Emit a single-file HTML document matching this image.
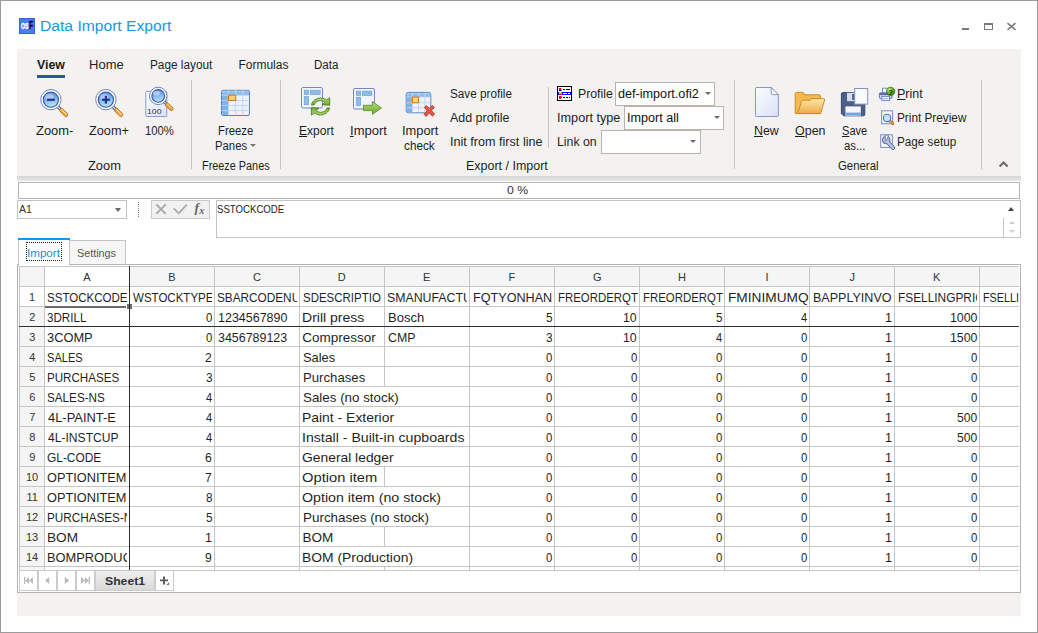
<!DOCTYPE html>
<html lang="en">
<head>
<meta charset="utf-8">
<title>Data Import Export</title>
<style>
html,body{margin:0;padding:0}
body{width:1038px;height:633px;position:relative;overflow:hidden;background:#fff;font-family:"Liberation Sans",sans-serif;font-size:12px;color:#1e1e1e}
div,span,svg{position:absolute;box-sizing:border-box}
.t{white-space:pre;transform-origin:0 0;display:block}
.t u{text-decoration:underline;text-underline-offset:1px}
.c{overflow:hidden}
#win{left:0;top:0;width:1038px;height:633px;border:1px solid #9b9b9b}
#ribbon{left:17px;top:49px;width:1004px;height:127px;background:#f3f2f1}
#shadow{left:17px;top:176px;width:1004px;height:5px;background:linear-gradient(#d6d5d4,#e9e8e7)}
.sep{width:1px;background:#c8c6c4;top:80px;height:89px}
.combo{background:#fff;border:1px solid #b9b5ae;height:24px;width:100px}
.arr{width:0;height:0;border-left:3px solid transparent;border-right:3px solid transparent;border-top:3px solid #6a6a6a}
#prog{left:18px;top:182px;width:1002px;height:17px;border:1px solid #b4b4b4;background:#fff}
#namebox{left:17px;top:200px;width:110px;height:19px;border:1px solid #c3c3c3;background:#fff}
#fbtn{left:151px;top:200px;width:59px;height:19px;border:1px solid #c9c9c9;background:#f1f1f1}
#finput{left:216px;top:200px;width:805px;height:38px;border:1px solid #c3c3c3;background:#fff}
#panel{left:17px;top:264px;width:1004px;height:329px;border:1px solid #b4b4b4;background:#fff}
#tab1{left:18px;top:240px;width:51px;height:26px;background:#fff;border-left:1px solid #c4c4c4}
#tab2{left:69px;top:240px;width:57px;height:24px;background:#f6f6f6;border:1px solid #c4c4c4;border-bottom:none}
#focus{left:26px;top:242px;width:36px;height:19px;border:1px dotted #222}
#grid{left:19px;top:266px;width:1000px;height:304px;overflow:hidden;background:#fff}
.hl{left:0;width:1000px;height:1px;background:#c5c5c5;margin-top:-266px}
.vl{width:1px;background:#c5c5c5;margin-left:-19px;margin-top:-266px}
.hc{top:1px;height:19px;background:#f5f5f5;border-left:0;margin-left:-19px}
.rh{left:1px;width:24px;background:#f5f5f5;margin-top:-266px}
#botstrip{left:17px;top:593px;width:1004px;height:23px;background:#f3f2f1}
.nb{top:570px;width:19px;height:21px;border:1px solid #cbcbcb;background:#fff}
</style>
</head>
<body>
<div id="win"></div>

<!-- title bar -->
<div id="appicon" style="left:19px;top:18px;width:16px;height:16px;background:#4b7bed;border:1px solid #3464dc">
  <span class="t" style="left:0.9px;top:2px;font-size:9px;line-height:10px;font-weight:700;color:#fff;-webkit-text-stroke:.5px #fff;transform:scaleX(.56)">OS</span>
  <span class="t" style="left:9.3px;top:0px;font-size:11px;line-height:12px;font-weight:700;color:#0e0638;-webkit-text-stroke:.4px #0e0638;transform:scaleX(.62)">F</span>
</div>
<div style="left:962px;top:28px;width:7px;height:2px;background:#7a7a7a"></div>
<div style="left:984px;top:23px;width:9px;height:7px;border:1px solid #7a7a7a;border-top-width:2px"></div>
<svg style="left:1006px;top:22px" width="11" height="9" viewBox="0 0 11 9"><path d="M1.5 1.2 L9.5 7.8 M9.5 1.2 L1.5 7.8" stroke="#7a7a7a" stroke-width="1.5" fill="none"/></svg>

<!-- ribbon -->
<div id="ribbon"></div>
<div id="shadow"></div>
<div style="left:37px;top:75px;width:28px;height:3px;background:#2b579a"></div>
<div class="sep" style="left:191px"></div>
<div class="sep" style="left:280px"></div>
<div class="sep" style="left:734px"></div>
<div class="sep" style="left:981px"></div>
<div class="sep" style="left:548px;top:87px;height:61px"></div>

<svg width="0" height="0" style="left:0;top:0">
  <defs>
    <linearGradient id="lens" x1="0" y1="0" x2="0.2" y2="1"><stop offset="0" stop-color="#4f86dc"/><stop offset=".5" stop-color="#7fb0ea"/><stop offset="1" stop-color="#b4e4f4"/></linearGradient>
    <linearGradient id="pg" x1="0" y1="0" x2="1" y2="1"><stop offset="0" stop-color="#fbfcff"/><stop offset="1" stop-color="#d9e2f5"/></linearGradient>
    <linearGradient id="hdr" x1="0" y1="0" x2="0" y2="1"><stop offset="0" stop-color="#a4cef2"/><stop offset="1" stop-color="#78b0e4"/></linearGradient>
    <linearGradient id="grn" x1="0" y1="0" x2="0" y2="1"><stop offset="0" stop-color="#b4dc78"/><stop offset="1" stop-color="#6ea832"/></linearGradient>
    <linearGradient id="fold" x1="0" y1="0" x2="0" y2="1"><stop offset="0" stop-color="#fde6ae"/><stop offset="1" stop-color="#efab45"/></linearGradient>
    <linearGradient id="org" x1="0" y1="0" x2="1" y2="1"><stop offset="0" stop-color="#f9c86a"/><stop offset="1" stop-color="#d8851e"/></linearGradient>
  </defs>
</svg>

<!-- Zoom- -->
<svg style="left:38px;top:87px" width="34" height="32" viewBox="0 0 34 32">
  <path d="M19.7 19.5 L22.9 22.7" stroke="#3d5296" stroke-width="3.2"/>
  <path d="M19.7 19.5 L22.9 22.7" stroke="#e4e9f6" stroke-width="1.3"/>
  <path d="M23.4 23.2 L28.0 27.8" stroke="#b56a1a" stroke-width="4.4" stroke-linecap="round"/>
  <path d="M23.4 23.2 L28.0 27.8" stroke="#f0a23a" stroke-width="3.1" stroke-linecap="round"/>
  <path d="M23.799999999999997 22.8 L28.3 27.3" stroke="#fde2b4" stroke-width="1.1" stroke-linecap="round"/>
  <circle cx="12.9" cy="12.65" r="10.2" fill="#fdfdff" stroke="#7583b6" stroke-width="1"/>
  <circle cx="12.9" cy="12.65" r="7.6" fill="url(#lens)" stroke="#3659a9" stroke-width="1.1"/>
  <ellipse cx="11.3" cy="9.850000000000001" rx="4.2" ry="2.9" fill="#fff" opacity=".42"/>
  <rect x="9" y="11.7" width="7.8" height="2.1" fill="#1d2f8a"/>
</svg>
<!-- Zoom+ -->
<svg style="left:93.3px;top:87px" width="34" height="32" viewBox="0 0 34 32">
  <path d="M19.7 19.5 L22.9 22.7" stroke="#3d5296" stroke-width="3.2"/>
  <path d="M19.7 19.5 L22.9 22.7" stroke="#e4e9f6" stroke-width="1.3"/>
  <path d="M23.4 23.2 L28.0 27.8" stroke="#b56a1a" stroke-width="4.4" stroke-linecap="round"/>
  <path d="M23.4 23.2 L28.0 27.8" stroke="#f0a23a" stroke-width="3.1" stroke-linecap="round"/>
  <path d="M23.799999999999997 22.8 L28.3 27.3" stroke="#fde2b4" stroke-width="1.1" stroke-linecap="round"/>
  <circle cx="12.9" cy="12.65" r="10.2" fill="#fdfdff" stroke="#7583b6" stroke-width="1"/>
  <circle cx="12.9" cy="12.65" r="7.6" fill="url(#lens)" stroke="#3659a9" stroke-width="1.1"/>
  <ellipse cx="11.3" cy="9.850000000000001" rx="4.2" ry="2.9" fill="#fff" opacity=".42"/>
  <rect x="9" y="11.7" width="7.8" height="2.1" fill="#1d2f8a"/><rect x="11.85" y="8.8" width="2.1" height="7.8" fill="#1d2f8a"/>
</svg>
<!-- 100% -->
<svg style="left:144px;top:85px" width="34" height="34" viewBox="0 0 34 34">
  <rect x="1.8" y="6.3" width="21" height="25.2" rx="1" fill="url(#pg)" stroke="#8a9bcd" stroke-width="1"/>
  <path d="M20 16.6 L22.6 19.2" stroke="#3d5296" stroke-width="2.9"/>
  <path d="M20 16.6 L22.6 19.2" stroke="#e4e9f6" stroke-width="1.2"/>
  <path d="M23.1 19.7 L27.4 23.8" stroke="#b56a1a" stroke-width="4.0" stroke-linecap="round"/>
  <path d="M23.1 19.7 L27.4 23.8" stroke="#f0a23a" stroke-width="2.7" stroke-linecap="round"/>
  <path d="M23.5 19.3 L27.7 23.3" stroke="#fde2b4" stroke-width="1.0" stroke-linecap="round"/>
  <circle cx="14.2" cy="10.9" r="8.7" fill="#fdfdff" stroke="#7583b6" stroke-width="1"/>
  <circle cx="14.2" cy="10.9" r="6.3" fill="url(#lens)" stroke="#3659a9" stroke-width="1.1"/>
  <ellipse cx="12.6" cy="8.100000000000001" rx="3.5" ry="2.4" fill="#fff" opacity=".42"/>
  
</svg>
<!-- Freeze panes -->
<svg style="left:220px;top:89px" width="32" height="28" viewBox="0 0 32 28">
  <rect x="1.5" y="1.3" width="28" height="25.2" rx="1.6" fill="#eef3fb" stroke="#4f7cc2" stroke-width="1"/>
  <path d="M2 3.3 Q2 1.8 3.5 1.8 H27.5 Q29 1.8 29 3.3 V6.3 H2Z" fill="url(#hdr)"/>
  <rect x="2" y="6" width="6.5" height="20" fill="#7db3e6"/>
  <path d="M8.5 1.5 V26.5 M15.7 1.5 V26.5 M22.8 1.5 V26.5 M1.5 6.2 H29.5 M1.5 11.5 H29.5 M1.5 16.5 H29.5 M1.5 21.6 H29.5" stroke="#c3d3ee" stroke-width="1" fill="none"/>
  <path d="M8.5 1.5 V6.2 M15.7 1.5 V6.2 M22.8 1.5 V6.2 M1.5 11.5 H8.5 M1.5 16.5 H8.5 M1.5 21.6 H8.5" stroke="#a9d0f2" stroke-width="1" fill="none"/>
  <rect x="8.5" y="6.2" width="7.2" height="5.3" fill="#f8cf72" stroke="#cf7a1c" stroke-width="1"/>
</svg>
<!-- Export -->
<svg style="left:300px;top:86px" width="32" height="30" viewBox="0 0 32 30">
  <rect x="1.5" y="1.5" width="21" height="20.5" rx="1.5" fill="#f0f4fc" stroke="#7386c6" stroke-width="1"/>
  <rect x="4.2" y="4.2" width="4.4" height="4.4" fill="#8cbce8" stroke="#6a9ed6" stroke-width=".6"/>
  <rect x="10.2" y="4.2" width="10" height="4.4" fill="#8cbce8" stroke="#6a9ed6" stroke-width=".6"/>
  <rect x="4.2" y="10.5" width="4.4" height="8.2" fill="#8cbce8" stroke="#6a9ed6" stroke-width=".6"/>
  <g stroke="#4f7f20" stroke-width=".9" fill="url(#grn)" stroke-linejoin="round">
    <path id="rarr" d="M11.4 18.9 C12.5 14.5 16.5 12 20.5 12 C23 12 25 12.8 26.6 14 L29.7 11.8 V19.2 L22.2 18.8 L24.6 16.4 C23.4 15.2 22 14.6 20.5 14.6 C17.5 14.6 15 16.2 14.1 18.9Z"/>
    <path d="M11.4 18.9 C12.5 14.5 16.5 12 20.5 12 C23 12 25 12.8 26.6 14 L29.7 11.8 V19.2 L22.2 18.8 L24.6 16.4 C23.4 15.2 22 14.6 20.5 14.6 C17.5 14.6 15 16.2 14.1 18.9Z" transform="rotate(180 20.55 20.45)"/>
  </g>
</svg>
<!-- Import -->
<svg style="left:352px;top:87px" width="32" height="30" viewBox="0 0 32 30">
  <rect x="1.5" y="1.5" width="21" height="20.5" rx="1.5" fill="#f0f4fc" stroke="#7386c6" stroke-width="1"/>
  <rect x="4.3" y="4.1" width="4.4" height="4.4" fill="#8cbce8" stroke="#6a9ed6" stroke-width=".6"/>
  <rect x="10.3" y="4.1" width="9.6" height="4.4" fill="#8cbce8" stroke="#6a9ed6" stroke-width=".6"/>
  <rect x="4.3" y="10.2" width="4.4" height="8.4" fill="#8cbce8" stroke="#6a9ed6" stroke-width=".6"/>
  <path d="M11.4 18.3 H20.4 V14.6 L29.4 21 L20.4 27.3 V23.6 H11.4Z" fill="url(#grn)" stroke="#5d8f2a" stroke-width=".9"/>
</svg>
<!-- Import check -->
<svg style="left:405px;top:91px" width="32" height="28" viewBox="0 0 32 28">
  <rect x="1.2" y="1.4" width="24.6" height="20.4" rx="2" fill="#eef3fb" stroke="#5b86c6" stroke-width="1"/>
  <path d="M1.7 3.4 Q1.7 1.9 3.2 1.9 H23.8 Q25.3 1.9 25.3 3.4 V6 H1.7Z" fill="url(#hdr)"/>
  <rect x="1.7" y="6" width="5.8" height="15.3" fill="#7db3e6"/>
  <path d="M7.4 1.9 V21.3 M13.6 1.9 V21.3 M19.9 1.9 V21.3 M1.7 6 H25.3 M1.7 11.7 H25.3 M1.7 16.7 H25.3" stroke="#c3d3ee" stroke-width="1" fill="none"/>
  <rect x="7.4" y="6" width="6.2" height="5.7" fill="#f8cf72" stroke="#cf7a1c" stroke-width="1"/>
  <path d="M19.4 16.2 L21.4 14.4 L24.2 17.4 L27.2 14.4 L29.4 16.4 L26.4 19.6 L29.6 23 L27.4 25.2 L24.2 22 L21.2 25.4 L19 23.2 L22 19.8Z" fill="#e25747" stroke="#b03020" stroke-width=".8"/>
</svg>
<!-- Profile icon -->
<svg style="left:557px;top:86px" width="15" height="15" viewBox="0 0 15 15" shape-rendering="crispEdges">
  <rect x=".5" y=".5" width="14" height="14" fill="#fff" stroke="#000" stroke-width="1"/>
  <rect x="1" y="6" width="13" height="3" fill="#0000ff"/>
  <rect x="2" y="2" width="1.5" height="1.5" fill="#e00000"/><rect x="3.5" y="2" width="1.5" height="1.5" fill="#e0e000"/><rect x="2" y="3.5" width="1.5" height="1.5" fill="#0000c0"/><rect x="3.5" y="3.5" width="1.5" height="1.5" fill="#00b000"/>
  <rect x="2" y="6" width="1.5" height="1.5" fill="#e0e000"/><rect x="3.5" y="6" width="1.5" height="1.5" fill="#00e0e0"/><rect x="2" y="7.5" width="1.5" height="1.5" fill="#e00000"/><rect x="3.5" y="7.5" width="1.5" height="1.5" fill="#e000e0"/>
  <rect x="2" y="10" width="1.5" height="1.5" fill="#e00000"/><rect x="3.5" y="10" width="1.5" height="1.5" fill="#00c000"/><rect x="2" y="11.5" width="1.5" height="1.5" fill="#e000e0"/><rect x="3.5" y="11.5" width="1.5" height="1.5" fill="#e0e000"/>
  <path d="M6 3.5 H8 M9 3.5 H13 M6 11.5 H8 M9 11.5 H11 M12 11.5 H13" stroke="#000" stroke-width="1"/>
  <path d="M6 7.5 H10 M11 7.5 H13" stroke="#fff" stroke-width="1"/>
</svg>
<!-- New -->
<svg style="left:754px;top:86px" width="26" height="32" viewBox="0 0 26 32">
  <path d="M2.2 1.5 H17.2 L24.4 8.6 V29 Q24.4 30.5 23 30.5 H2.2 Q1.5 30.5 1.5 29.6 V2.3 Q1.5 1.5 2.2 1.5Z" fill="url(#pg)" stroke="#8797c9" stroke-width="1"/>
  <path d="M17.2 1.5 V7.4 Q17.2 8.6 18.4 8.6 H24.4Z" fill="#f7f9fe" stroke="#8797c9" stroke-width="1" stroke-linejoin="round"/>
</svg>
<!-- Open -->
<svg style="left:794px;top:91px" width="32" height="24" viewBox="0 0 32 24">
  <path d="M1.2 3 Q1.2 1.4 2.6 1.4 H8.6 Q9.6 1.4 10 2.4 L10.6 3.8 H25 Q26.4 3.8 26.4 5.2 V22.4 H1.2Z" fill="#f3b94b" stroke="#cf8a1f" stroke-width="1"/>
  <path d="M3.4 22.6 L7.6 10.4 Q8 9.2 9.4 9.2 L16 9.2 L18 7.6 H29.6 Q31 7.6 30.6 9 L26.6 22.6Z" fill="url(#fold)" stroke="#cf8a1f" stroke-width="1" stroke-linejoin="round"/>
</svg>
<!-- Save as -->
<svg style="left:840px;top:87px" width="30" height="30" viewBox="0 0 30 30">
  <path d="M1.4 7 Q1.4 5.6 2.8 5.6 H23.4 Q24.8 5.6 24.8 7 V27.4 Q24.8 28.8 23.4 28.8 H3.6 L1.4 26.6Z" fill="#4d5e88" stroke="#39486e" stroke-width="1"/>
  <rect x="7" y="5.8" width="9" height="8.4" fill="#d5deef"/>
  <rect x="12.2" y="7" width="2.6" height="6" fill="#4d5e88"/>
  <rect x="5.4" y="19.4" width="15.4" height="9.2" fill="#f4f7fc"/>
  <rect x="5.4" y="25.6" width="15.4" height="2.4" fill="#6fa6e2"/>
  <rect x="14.7" y="1.5" width="13" height="15.6" fill="#fafbff" stroke="#8292c6" stroke-width="1"/>
</svg>
<!-- Print -->
<svg style="left:878px;top:86px" width="18" height="16" viewBox="0 0 18 16">
  <defs><radialGradient id="gball" cx="35%" cy="30%" r="75%"><stop offset="0" stop-color="#c6ee7a"/><stop offset=".55" stop-color="#62b02a"/><stop offset="1" stop-color="#2f7a14"/></radialGradient></defs>
  <rect x="4.4" y="2.2" width="6" height="5" fill="#f4f7fd" stroke="#6f80bb" stroke-width=".9"/>
  <rect x="1.4" y="6.8" width="12.6" height="5.8" rx="1.2" fill="#c3cff0" stroke="#5667a6" stroke-width=".9"/>
  <rect x="1.9" y="7.2" width="11.6" height="1.8" fill="#5868a4"/>
  <rect x="3.9" y="10.4" width="7.6" height="4.2" fill="#fafcff" stroke="#6f80bb" stroke-width=".9"/>
  <rect x="5" y="12.2" width="5.4" height="1" fill="#7fb0e6"/>
  <circle cx="12.6" cy="5.4" r="4.2" fill="url(#gball)" stroke="#2c6a12" stroke-width=".7"/>
</svg>
<!-- Print preview -->
<svg style="left:880px;top:109px" width="16" height="17" viewBox="0 0 16 17">
  <rect x="1.6" y="1.8" width="11" height="13" fill="#f7f9fe" stroke="#7a8ac6" stroke-width="1"/>
  <path d="M9.8 11.9 L12.9 14.6" stroke="#a65f14" stroke-width="2.6" stroke-linecap="round"/>
  <path d="M9.8 11.9 L12.9 14.6" stroke="#f0a040" stroke-width="1.3" stroke-linecap="round"/>
  <circle cx="7.1" cy="8.9" r="3.7" fill="#c4e4f8" stroke="#4f70c0" stroke-width="1.1"/>
</svg>
<!-- Page setup -->
<svg style="left:879px;top:133px" width="17" height="17" viewBox="0 0 17 17">
  <rect x="1.7" y="1.8" width="11.6" height="12.6" fill="#f7f9fe" stroke="#7a8ac6" stroke-width="1"/>
  <path d="M8.6 8.8 L14 14.8" stroke="#56668e" stroke-width="4.2" stroke-linecap="round"/>
  <circle cx="7.2" cy="7" r="3.9" fill="#aab6d0" stroke="#56668e" stroke-width=".9"/>
  <path d="M8.6 8.8 L14 14.8" stroke="#b8c4dc" stroke-width="2.5" stroke-linecap="round"/>
  <path d="M7.2 7.4 L5.9 2.2 L9.6 2.4Z" fill="#f7f9fe" stroke="#56668e" stroke-width=".6"/>
</svg>


<div class="combo" style="left:615px;top:82px"></div>
<div class="combo" style="left:624px;top:106px"></div>
<div class="combo" style="left:601px;top:130px"></div>
<div class="arr" style="left:705px;top:92px"></div>
<div class="arr" style="left:714px;top:116px"></div>
<div class="arr" style="left:690px;top:140px"></div>
<div class="arr" style="left:250px;top:144px;border-top-color:#777"></div>
<svg style="left:998px;top:160px" width="11" height="8" viewBox="0 0 11 8"><path d="M1.6 6.4 L5.6 2.4 L9.6 6.4" stroke="#696969" stroke-width="2.1" fill="none"/></svg>

<!-- progress + formula bar -->
<div id="prog"></div>
<div id="namebox"></div>
<div class="arr" style="left:115.2px;top:207.8px;border-left-width:3.4px;border-right-width:3.4px;border-top-width:4px;border-top-color:#666"></div>
<div style="left:138px;top:202px;width:1px;height:15px;background:repeating-linear-gradient(#777 0 1px,transparent 1px 2px)"></div>
<div id="fbtn"></div>
<svg style="left:155px;top:203px" width="52" height="13" viewBox="0 0 52 13">
  <path d="M1.3 1.3 L10.8 10.8 M10.8 1.3 L1.3 10.8" stroke="#a9a9a9" stroke-width="1.9" fill="none"/>
  <path d="M18.8 5.4 L23.7 10.3 L31.8 1.6" stroke="#a9a9a9" stroke-width="1.8" fill="none"/>
</svg>
<span class="t" style="left:194.5px;top:200px;font-family:'Liberation Serif',serif;font-style:italic;font-weight:700;font-size:13.5px;line-height:16px;color:#666">f</span>
<span class="t" style="left:199.3px;top:205px;font-family:'Liberation Serif',serif;font-style:italic;font-weight:700;font-size:10.5px;line-height:12px;color:#666">x</span>
<div id="finput"></div>
<div style="left:1003px;top:218px;width:1px;height:19px;background:#c5c5c5"></div>
<div class="arr" style="left:1008px;top:207px;border-left-width:3.5px;border-right-width:3.5px;border-top:none;border-bottom:4px solid #444"></div>
<div class="arr" style="left:1009px;top:221px;border-top:none;border-bottom:3px solid #cfcfcf"></div>
<div class="arr" style="left:1009px;top:230px;border-top:3px solid #cfcfcf"></div>

<!-- page tabs -->
<div id="panel"></div>
<div id="tab2"></div>
<div id="tab1"></div>
<div style="left:18px;top:238px;width:52px;height:2px;background:#1498ee"></div>
<div id="focus"></div>

<!-- grid -->
<div id="grid">
  <div style="left:1px;top:1px;width:999px;height:19px;background:#f5f5f5"></div>

  <div class="hc" style="left:45px;width:84px;background:#fff"></div>
<div class="rh" style="top:287px;height:19px"></div>
<div class="rh" style="top:307px;height:19px"></div>
<div class="rh" style="top:327px;height:19px"></div>
<div class="rh" style="top:347px;height:19px"></div>
<div class="rh" style="top:367px;height:19px"></div>
<div class="rh" style="top:387px;height:19px"></div>
<div class="rh" style="top:407px;height:19px"></div>
<div class="rh" style="top:427px;height:19px"></div>
<div class="rh" style="top:447px;height:19px"></div>
<div class="rh" style="top:467px;height:19px"></div>
<div class="rh" style="top:487px;height:19px"></div>
<div class="rh" style="top:507px;height:19px"></div>
<div class="rh" style="top:527px;height:19px"></div>
<div class="rh" style="top:547px;height:19px"></div>
<div class="rh" style="top:567px;height:3px"></div>
  <div class="rh" style="top:287px;height:19px;background:#fff"></div>
  <div style="left:0;top:0;width:1000px;height:1px;background:#c5c5c5"></div>
  <div style="left:0;top:0;width:1px;height:304px;background:#c5c5c5"></div>
  <div class="vl" style="left:44px;top:266px;height:304px"></div>
<div class="hl" style="top:286px"></div>
<div class="hl" style="top:306px"></div>
<div class="hl" style="top:326px"></div>
<div class="hl" style="top:346px"></div>
<div class="hl" style="top:366px"></div>
<div class="hl" style="top:386px"></div>
<div class="hl" style="top:406px"></div>
<div class="hl" style="top:426px"></div>
<div class="hl" style="top:446px"></div>
<div class="hl" style="top:466px"></div>
<div class="hl" style="top:486px"></div>
<div class="hl" style="top:506px"></div>
<div class="hl" style="top:526px"></div>
<div class="hl" style="top:546px"></div>
<div class="hl" style="top:566px"></div>
<div class="vl" style="left:214px;top:267px;height:303px"></div>
<div class="vl" style="left:299px;top:267px;height:303px"></div>
<div class="vl" style="left:384px;top:267px;height:120px"></div>
<div class="vl" style="left:384px;top:406px;height:1px"></div>
<div class="vl" style="left:384px;top:426px;height:1px"></div>
<div class="vl" style="left:384px;top:446px;height:1px"></div>
<div class="vl" style="left:384px;top:466px;height:21px"></div>
<div class="vl" style="left:384px;top:506px;height:1px"></div>
<div class="vl" style="left:384px;top:526px;height:21px"></div>
<div class="vl" style="left:384px;top:566px;height:4px"></div>
<div class="vl" style="left:469px;top:267px;height:303px"></div>
<div class="vl" style="left:554px;top:267px;height:303px"></div>
<div class="vl" style="left:639px;top:267px;height:303px"></div>
<div class="vl" style="left:724px;top:267px;height:303px"></div>
<div class="vl" style="left:809px;top:267px;height:303px"></div>
<div class="vl" style="left:894px;top:267px;height:303px"></div>
<div class="vl" style="left:979px;top:267px;height:303px"></div>
  <div class="hl" style="top:570px"></div>
</div>
<!-- header column separators -->
<!--HSEP-->
<div style="left:45px;top:306px;width:82px;height:2px;background:#6a6a6a"></div>
<div style="left:126px;top:303px;width:7px;height:7px;background:#6c6c6c;border:1px solid #fff"></div>
<div style="left:129px;top:266px;width:1px;height:305px;background:#2e2e2e"></div>
<div style="left:19px;top:326px;width:1000px;height:1px;background:#2e2e2e"></div>

<!-- sheet tab bar -->
<div style="left:19px;top:570px;width:1000px;height:1px;background:#c5c5c5"></div>
<div class="nb" style="left:19px"></div>
<div class="nb" style="left:38px"></div>
<div class="nb" style="left:57px"></div>
<div class="nb" style="left:76px"></div>
<div style="left:95px;top:571px;width:60px;height:20px;background:linear-gradient(#efefef,#d9d9d9);border:1px solid #cdcdcd;border-top:none"></div>
<div class="nb" style="left:155px"></div>
<svg style="left:19px;top:570px" width="160" height="22" viewBox="0 0 160 22">
  <g fill="#b9b9b9">
    <rect x="5" y="6.9" width="1.3" height="7.2"/><path d="M10 6.9 L6.2 10.5 L10 14.1Z"/><path d="M13.9 6.9 L10.1 10.5 L13.9 14.1Z"/>
    <path d="M30.2 6.9 L26 10.5 L30.2 14.1Z"/>
    <path d="M45.8 6.9 L50.2 10.5 L45.8 14.1Z"/>
    <path d="M62 6.9 L65.9 10.5 L62 14.1Z"/><path d="M65.9 6.9 L69.8 10.5 L65.9 14.1Z"/><rect x="69.7" y="6.9" width="1.3" height="7.2"/>
  </g>
  <path d="M141 10.4 H149 M145 6.6 V14.4" stroke="#5a5a5a" stroke-width="1.9" fill="none"/>
  <path d="M150 12.2 V15 H147.4Z" fill="#6a6a6a"/>
</svg>
<div id="botstrip"></div>

<span class="t" style="left:40.0px;top:16px;font-size:15.5px;line-height:19px;color:#1499e4;transform:scaleX(1.0092);">Data Import Export</span>
<span class="t" style="left:37.1px;top:58px;font-size:12px;line-height:15px;color:#1a1a1a;font-weight:700;transform:scaleX(1.0278);">View</span>
<span class="t" style="left:89.1px;top:58px;font-size:12px;line-height:15px;color:#1e1e1e;transform:scaleX(1.0840);">Home</span>
<span class="t" style="left:149.6px;top:58px;font-size:12px;line-height:15px;color:#1e1e1e;transform:scaleX(0.9832);">Page layout</span>
<span class="t" style="left:238.4px;top:58px;font-size:12px;line-height:15px;color:#1e1e1e;">Formulas</span>
<span class="t" style="left:314.4px;top:58px;font-size:12px;line-height:15px;color:#1e1e1e;transform:scaleX(0.9622);">Data</span>
<span class="t" style="left:35.6px;top:124px;font-size:12px;line-height:15px;color:#1e1e1e;transform:scaleX(1.0791);">Zoom-</span>
<span class="t" style="left:88.6px;top:124px;font-size:12px;line-height:15px;color:#1e1e1e;transform:scaleX(1.0605);">Zoom+</span>
<span class="t" style="left:144.6px;top:124px;font-size:12px;line-height:15px;color:#1e1e1e;transform:scaleX(0.9397);">100%</span>
<span class="t" style="left:87.6px;top:159px;font-size:12px;line-height:15px;color:#1e1e1e;transform:scaleX(1.0718);">Zoom</span>
<span class="t" style="left:217.9px;top:124px;font-size:12px;line-height:15px;color:#1e1e1e;transform:scaleX(0.9422);">Freeze</span>
<span class="t" style="left:215.4px;top:139px;font-size:12px;line-height:15px;color:#1e1e1e;transform:scaleX(0.9426);">Panes</span>
<span class="t" style="left:202.4px;top:159px;font-size:12px;line-height:15px;color:#1e1e1e;transform:scaleX(0.9052);">Freeze Panes</span>
<span class="t" style="left:299.2px;top:124px;font-size:12px;line-height:15px;color:#1e1e1e;transform:scaleX(1.0045);"><u>E</u>xport</span>
<span class="t" style="left:349.7px;top:124px;font-size:12px;line-height:15px;color:#1e1e1e;transform:scaleX(1.0846);"><u>I</u>mport</span>
<span class="t" style="left:401.8px;top:124px;font-size:12px;line-height:15px;color:#1e1e1e;transform:scaleX(1.0693);">Import</span>
<span class="t" style="left:404.2px;top:139px;font-size:12px;line-height:15px;color:#1e1e1e;transform:scaleX(0.9807);">check</span>
<span class="t" style="left:449.8px;top:87px;font-size:12px;line-height:15px;color:#1e1e1e;transform:scaleX(0.9768);">Save profile</span>
<span class="t" style="left:450.3px;top:111px;font-size:12px;line-height:15px;color:#1e1e1e;transform:scaleX(1.0361);">Add profile</span>
<span class="t" style="left:449.7px;top:135px;font-size:12px;line-height:15px;color:#1e1e1e;transform:scaleX(1.0510);">Init from first line</span>
<span class="t" style="left:466.3px;top:159px;font-size:12px;line-height:15px;color:#1e1e1e;transform:scaleX(1.0392);">Export / Import</span>
<span class="t" style="left:577.5px;top:87px;font-size:12px;line-height:15px;color:#1e1e1e;transform:scaleX(1.0234);">Profile</span>
<span class="t" style="left:617.7px;top:87px;font-size:12px;line-height:15px;color:#111;transform:scaleX(1.0526);">def-import.ofi2</span>
<span class="t" style="left:556.8px;top:111px;font-size:12px;line-height:15px;color:#1e1e1e;transform:scaleX(1.0565);">Import type</span>
<span class="t" style="left:626.8px;top:111px;font-size:12px;line-height:15px;color:#111;transform:scaleX(1.0488);">Import all</span>
<span class="t" style="left:557.0px;top:135px;font-size:12px;line-height:15px;color:#1e1e1e;transform:scaleX(1.0251);">Link on</span>
<span class="t" style="left:754.2px;top:124px;font-size:12px;line-height:15px;color:#1e1e1e;transform:scaleX(1.0308);"><u>N</u>ew</span>
<span class="t" style="left:795.3px;top:124px;font-size:12px;line-height:15px;color:#1e1e1e;transform:scaleX(1.0381);"><u>O</u>pen</span>
<span class="t" style="left:841.7px;top:124px;font-size:12px;line-height:15px;color:#1e1e1e;transform:scaleX(0.9230);"><u>S</u>ave</span>
<span class="t" style="left:843.7px;top:139px;font-size:12px;line-height:15px;color:#1e1e1e;transform:scaleX(0.9435);">as...</span>
<span class="t" style="left:897.2px;top:87px;font-size:12px;line-height:15px;color:#1e1e1e;transform:scaleX(1.0448);"><u>P</u>rint</span>
<span class="t" style="left:897.3px;top:111px;font-size:12px;line-height:15px;color:#1e1e1e;transform:scaleX(0.9818);">Print Pre<u>v</u>iew</span>
<span class="t" style="left:897.3px;top:135px;font-size:12px;line-height:15px;color:#1e1e1e;transform:scaleX(0.9749);">Page setup</span>
<span class="t" style="left:837.7px;top:159px;font-size:12px;line-height:15px;color:#1e1e1e;transform:scaleX(0.9486);">General</span>
<span class="t" style="left:507.2px;top:183px;font-size:11px;line-height:14px;color:#333;transform:scaleX(1.1115);">0 %</span>
<span class="t" style="left:19.3px;top:202px;font-size:11px;line-height:14px;color:#333;transform:scaleX(0.9662);">A1</span>
<span class="t" style="left:217.3px;top:202px;font-size:11px;line-height:14px;color:#222;transform:scaleX(0.8745);">SSTOCKCODE</span>
<span class="t" style="left:26.8px;top:246px;font-size:11px;line-height:14px;color:#1c8ad4;transform:scaleX(1.0559);">Import</span>
<span class="t" style="left:77.4px;top:246px;font-size:11px;line-height:14px;color:#555;transform:scaleX(0.9808);">Settings</span>
<span class="t" style="left:104.7px;top:574px;font-size:11px;line-height:14px;color:#333;font-weight:700;transform:scaleX(1.1097);">Sheet1</span>
<span class="t" style="left:146.9px;top:107px;font-size:8px;line-height:10px;color:#333;transform:scaleX(1.0925);">100</span>
<span class="t" style="left:888.6px;top:88px;font-size:7px;line-height:9px;color:#0f2c08;font-weight:700;">?</span>
<span class="t" style="left:83.3px;top:270px;font-size:11px;line-height:14px;color:#333;">A</span>
<span class="t" style="left:168.2px;top:270px;font-size:11px;line-height:14px;color:#333;">B</span>
<span class="t" style="left:252.9px;top:270px;font-size:11px;line-height:14px;color:#333;">C</span>
<span class="t" style="left:337.8px;top:270px;font-size:11px;line-height:14px;color:#333;">D</span>
<span class="t" style="left:423.1px;top:270px;font-size:11px;line-height:14px;color:#333;">E</span>
<span class="t" style="left:508.4px;top:270px;font-size:11px;line-height:14px;color:#333;">F</span>
<span class="t" style="left:592.9px;top:270px;font-size:11px;line-height:14px;color:#333;">G</span>
<span class="t" style="left:678.0px;top:270px;font-size:11px;line-height:14px;color:#333;">H</span>
<span class="t" style="left:765.5px;top:270px;font-size:11px;line-height:14px;color:#333;">I</span>
<span class="t" style="left:849.6px;top:270px;font-size:11px;line-height:14px;color:#333;">J</span>
<span class="t" style="left:932.9px;top:270px;font-size:11px;line-height:14px;color:#333;">K</span>
<span class="t" style="left:47.0px;top:289px;font-size:13.5px;line-height:17px;color:#1f1f1f;transform:scaleX(0.8544);">SSTOCKCODE</span>
<div class="c" style="left:132.9px;top:289px;width:79.1px;height:17px"><span class="t" style="left:0;top:0;font-size:13.5px;line-height:17px;color:#1f1f1f;transform:scaleX(0.8537);">WSTOCKTYPE</span></div>
<div class="c" style="left:217.3px;top:289px;width:79.7px;height:17px"><span class="t" style="left:0;top:0;font-size:13.5px;line-height:17px;color:#1f1f1f;transform:scaleX(0.8727);">SBARCODENU</span></div>
<span class="t" style="left:302.5px;top:289px;font-size:13.5px;line-height:17px;color:#1f1f1f;transform:scaleX(0.8508);">SDESCRIPTIO</span>
<div class="c" style="left:387.3px;top:289px;width:79.7px;height:17px"><span class="t" style="left:0;top:0;font-size:13.5px;line-height:17px;color:#1f1f1f;transform:scaleX(0.9128);">SMANUFACTU</span></div>
<span class="t" style="left:472.8px;top:289px;font-size:13.5px;line-height:17px;color:#1f1f1f;transform:scaleX(0.9347);">FQTYONHAN</span>
<span class="t" style="left:557.9px;top:289px;font-size:13.5px;line-height:17px;color:#1f1f1f;transform:scaleX(0.8464);">FREORDERQT</span>
<span class="t" style="left:642.9px;top:289px;font-size:13.5px;line-height:17px;color:#1f1f1f;transform:scaleX(0.8464);">FREORDERQT</span>
<span class="t" style="left:727.7px;top:289px;font-size:13.5px;line-height:17px;color:#1f1f1f;transform:scaleX(1.0136);">FMINIMUMQ</span>
<span class="t" style="left:813.3px;top:289px;font-size:13.5px;line-height:17px;color:#1f1f1f;transform:scaleX(0.9289);">BAPPLYINVO</span>
<div class="c" style="left:898.2px;top:289px;width:78.8px;height:17px"><span class="t" style="left:0;top:0;font-size:13.5px;line-height:17px;color:#1f1f1f;transform:scaleX(0.8795);">FSELLINGPRIC</span></div>
<span class="t" style="left:983.1px;top:289px;font-size:13.5px;line-height:17px;color:#1f1f1f;transform:scaleX(0.8024);">FSELLI</span>
<span class="t" style="left:47.3px;top:309px;font-size:13.5px;line-height:17px;color:#1f1f1f;transform:scaleX(0.8597);">3DRILL</span>
<span class="t" style="left:47.3px;top:329px;font-size:13.5px;line-height:17px;color:#1f1f1f;transform:scaleX(0.9507);">3COMP</span>
<span class="t" style="left:47.4px;top:349px;font-size:13.5px;line-height:17px;color:#1f1f1f;transform:scaleX(0.8205);">SALES</span>
<span class="t" style="left:47.4px;top:369px;font-size:13.5px;line-height:17px;color:#1f1f1f;transform:scaleX(0.8592);">PURCHASES</span>
<span class="t" style="left:47.3px;top:389px;font-size:13.5px;line-height:17px;color:#1f1f1f;transform:scaleX(0.8664);">SALES-NS</span>
<span class="t" style="left:47.5px;top:409px;font-size:13.5px;line-height:17px;color:#1f1f1f;transform:scaleX(0.9553);">4L-PAINT-E</span>
<span class="t" style="left:47.5px;top:429px;font-size:13.5px;line-height:17px;color:#1f1f1f;transform:scaleX(0.8963);">4L-INSTCUP</span>
<span class="t" style="left:47.1px;top:449px;font-size:13.5px;line-height:17px;color:#1f1f1f;transform:scaleX(0.8821);">GL-CODE</span>
<span class="t" style="left:47.1px;top:469px;font-size:13.5px;line-height:17px;color:#1f1f1f;transform:scaleX(0.9447);">OPTIONITEM</span>
<div class="c" style="left:47.1px;top:489px;width:79.9px;height:17px"><span class="t" style="left:0;top:0;font-size:13.5px;line-height:17px;color:#1f1f1f;transform:scaleX(0.9447);">OPTIONITEM-</span></div>
<div class="c" style="left:47.4px;top:509px;width:79.6px;height:17px"><span class="t" style="left:0;top:0;font-size:13.5px;line-height:17px;color:#1f1f1f;transform:scaleX(0.8681);">PURCHASES-N</span></div>
<span class="t" style="left:47.2px;top:529px;font-size:13.5px;line-height:17px;color:#1f1f1f;transform:scaleX(1.0074);">BOM</span>
<div class="c" style="left:47.3px;top:549px;width:79.7px;height:17px"><span class="t" style="left:0;top:0;font-size:13.5px;line-height:17px;color:#1f1f1f;transform:scaleX(0.9515);">BOMPRODUC</span></div>
<span class="t" style="left:217.6px;top:309px;font-size:13.5px;line-height:17px;color:#1f1f1f;transform:scaleX(0.9242);">1234567890</span>
<span class="t" style="left:218.0px;top:329px;font-size:13.5px;line-height:17px;color:#1f1f1f;transform:scaleX(0.9216);">3456789123</span>
<span class="t" style="left:302.4px;top:309px;font-size:13.5px;line-height:17px;color:#1f1f1f;transform:scaleX(1.0388);">Drill press</span>
<span class="t" style="left:302.3px;top:329px;font-size:13.5px;line-height:17px;color:#1f1f1f;">Compressor</span>
<span class="t" style="left:302.5px;top:349px;font-size:13.5px;line-height:17px;color:#1f1f1f;transform:scaleX(0.9537);">Sales</span>
<span class="t" style="left:302.5px;top:369px;font-size:13.5px;line-height:17px;color:#1f1f1f;transform:scaleX(0.9758);">Purchases</span>
<span class="t" style="left:302.5px;top:389px;font-size:13.5px;line-height:17px;color:#1f1f1f;transform:scaleX(0.9899);">Sales (no stock)</span>
<span class="t" style="left:302.4px;top:409px;font-size:13.5px;line-height:17px;color:#1f1f1f;transform:scaleX(1.0311);">Paint - Exterior</span>
<span class="t" style="left:301.8px;top:429px;font-size:13.5px;line-height:17px;color:#1f1f1f;transform:scaleX(1.0459);">Install - Built-in cupboards</span>
<span class="t" style="left:302.3px;top:449px;font-size:13.5px;line-height:17px;color:#1f1f1f;transform:scaleX(1.0259);">General ledger</span>
<span class="t" style="left:302.2px;top:469px;font-size:13.5px;line-height:17px;color:#1f1f1f;transform:scaleX(1.0901);">Option item</span>
<span class="t" style="left:302.2px;top:489px;font-size:13.5px;line-height:17px;color:#1f1f1f;transform:scaleX(1.0534);">Option item (no stock)</span>
<span class="t" style="left:302.5px;top:509px;font-size:13.5px;line-height:17px;color:#1f1f1f;transform:scaleX(0.9940);">Purchases (no stock)</span>
<span class="t" style="left:302.4px;top:529px;font-size:13.5px;line-height:17px;color:#1f1f1f;">BOM</span>
<span class="t" style="left:302.4px;top:549px;font-size:13.5px;line-height:17px;color:#1f1f1f;transform:scaleX(1.0275);">BOM (Production)</span>
<span class="t" style="left:387.9px;top:309px;font-size:13.5px;line-height:17px;color:#1f1f1f;transform:scaleX(0.9634);">Bosch</span>
<span class="t" style="left:387.7px;top:329px;font-size:13.5px;line-height:17px;color:#1f1f1f;transform:scaleX(0.9132);">CMP</span>
<span class="t" style="left:205.6px;top:309px;font-size:13.5px;line-height:17px;color:#1f1f1f;transform:scaleX(0.8444);">0</span>
<span class="t" style="left:205.6px;top:329px;font-size:13.5px;line-height:17px;color:#1f1f1f;transform:scaleX(0.8444);">0</span>
<span class="t" style="left:205.4px;top:349px;font-size:13.5px;line-height:17px;color:#1f1f1f;transform:scaleX(0.9007);">2</span>
<span class="t" style="left:205.6px;top:369px;font-size:13.5px;line-height:17px;color:#1f1f1f;transform:scaleX(0.8717);">3</span>
<span class="t" style="left:205.8px;top:389px;font-size:13.5px;line-height:17px;color:#1f1f1f;transform:scaleX(0.8189);">4</span>
<span class="t" style="left:205.8px;top:409px;font-size:13.5px;line-height:17px;color:#1f1f1f;transform:scaleX(0.8189);">4</span>
<span class="t" style="left:205.8px;top:429px;font-size:13.5px;line-height:17px;color:#1f1f1f;transform:scaleX(0.8189);">4</span>
<span class="t" style="left:205.4px;top:449px;font-size:13.5px;line-height:17px;color:#1f1f1f;transform:scaleX(0.9007);">6</span>
<span class="t" style="left:205.4px;top:469px;font-size:13.5px;line-height:17px;color:#1f1f1f;transform:scaleX(0.9007);">7</span>
<span class="t" style="left:205.6px;top:489px;font-size:13.5px;line-height:17px;color:#1f1f1f;transform:scaleX(0.8717);">8</span>
<span class="t" style="left:205.6px;top:509px;font-size:13.5px;line-height:17px;color:#1f1f1f;transform:scaleX(0.8717);">5</span>
<span class="t" style="left:205.2px;top:529px;font-size:13.5px;line-height:17px;color:#1f1f1f;transform:scaleX(0.9318);">1</span>
<span class="t" style="left:205.4px;top:549px;font-size:13.5px;line-height:17px;color:#1f1f1f;transform:scaleX(0.9007);">9</span>
<span class="t" style="left:545.6px;top:309px;font-size:13.5px;line-height:17px;color:#1f1f1f;transform:scaleX(0.8717);">5</span>
<span class="t" style="left:545.6px;top:329px;font-size:13.5px;line-height:17px;color:#1f1f1f;transform:scaleX(0.8717);">3</span>
<span class="t" style="left:545.6px;top:349px;font-size:13.5px;line-height:17px;color:#1f1f1f;transform:scaleX(0.8444);">0</span>
<span class="t" style="left:545.6px;top:369px;font-size:13.5px;line-height:17px;color:#1f1f1f;transform:scaleX(0.8444);">0</span>
<span class="t" style="left:545.6px;top:389px;font-size:13.5px;line-height:17px;color:#1f1f1f;transform:scaleX(0.8444);">0</span>
<span class="t" style="left:545.6px;top:409px;font-size:13.5px;line-height:17px;color:#1f1f1f;transform:scaleX(0.8444);">0</span>
<span class="t" style="left:545.6px;top:429px;font-size:13.5px;line-height:17px;color:#1f1f1f;transform:scaleX(0.8444);">0</span>
<span class="t" style="left:545.6px;top:449px;font-size:13.5px;line-height:17px;color:#1f1f1f;transform:scaleX(0.8444);">0</span>
<span class="t" style="left:545.6px;top:469px;font-size:13.5px;line-height:17px;color:#1f1f1f;transform:scaleX(0.8444);">0</span>
<span class="t" style="left:545.6px;top:489px;font-size:13.5px;line-height:17px;color:#1f1f1f;transform:scaleX(0.8444);">0</span>
<span class="t" style="left:545.6px;top:509px;font-size:13.5px;line-height:17px;color:#1f1f1f;transform:scaleX(0.8444);">0</span>
<span class="t" style="left:545.6px;top:529px;font-size:13.5px;line-height:17px;color:#1f1f1f;transform:scaleX(0.8444);">0</span>
<span class="t" style="left:545.6px;top:549px;font-size:13.5px;line-height:17px;color:#1f1f1f;transform:scaleX(0.8444);">0</span>
<span class="t" style="left:623.3px;top:309px;font-size:13.5px;line-height:17px;color:#1f1f1f;transform:scaleX(0.9107);">10</span>
<span class="t" style="left:623.3px;top:329px;font-size:13.5px;line-height:17px;color:#1f1f1f;transform:scaleX(0.9107);">10</span>
<span class="t" style="left:630.6px;top:349px;font-size:13.5px;line-height:17px;color:#1f1f1f;transform:scaleX(0.8444);">0</span>
<span class="t" style="left:630.6px;top:369px;font-size:13.5px;line-height:17px;color:#1f1f1f;transform:scaleX(0.8444);">0</span>
<span class="t" style="left:630.6px;top:389px;font-size:13.5px;line-height:17px;color:#1f1f1f;transform:scaleX(0.8444);">0</span>
<span class="t" style="left:630.6px;top:409px;font-size:13.5px;line-height:17px;color:#1f1f1f;transform:scaleX(0.8444);">0</span>
<span class="t" style="left:630.6px;top:429px;font-size:13.5px;line-height:17px;color:#1f1f1f;transform:scaleX(0.8444);">0</span>
<span class="t" style="left:630.6px;top:449px;font-size:13.5px;line-height:17px;color:#1f1f1f;transform:scaleX(0.8444);">0</span>
<span class="t" style="left:630.6px;top:469px;font-size:13.5px;line-height:17px;color:#1f1f1f;transform:scaleX(0.8444);">0</span>
<span class="t" style="left:630.6px;top:489px;font-size:13.5px;line-height:17px;color:#1f1f1f;transform:scaleX(0.8444);">0</span>
<span class="t" style="left:630.6px;top:509px;font-size:13.5px;line-height:17px;color:#1f1f1f;transform:scaleX(0.8444);">0</span>
<span class="t" style="left:630.6px;top:529px;font-size:13.5px;line-height:17px;color:#1f1f1f;transform:scaleX(0.8444);">0</span>
<span class="t" style="left:630.6px;top:549px;font-size:13.5px;line-height:17px;color:#1f1f1f;transform:scaleX(0.8444);">0</span>
<span class="t" style="left:715.6px;top:309px;font-size:13.5px;line-height:17px;color:#1f1f1f;transform:scaleX(0.8717);">5</span>
<span class="t" style="left:715.8px;top:329px;font-size:13.5px;line-height:17px;color:#1f1f1f;transform:scaleX(0.8189);">4</span>
<span class="t" style="left:715.6px;top:349px;font-size:13.5px;line-height:17px;color:#1f1f1f;transform:scaleX(0.8444);">0</span>
<span class="t" style="left:715.6px;top:369px;font-size:13.5px;line-height:17px;color:#1f1f1f;transform:scaleX(0.8444);">0</span>
<span class="t" style="left:715.6px;top:389px;font-size:13.5px;line-height:17px;color:#1f1f1f;transform:scaleX(0.8444);">0</span>
<span class="t" style="left:715.6px;top:409px;font-size:13.5px;line-height:17px;color:#1f1f1f;transform:scaleX(0.8444);">0</span>
<span class="t" style="left:715.6px;top:429px;font-size:13.5px;line-height:17px;color:#1f1f1f;transform:scaleX(0.8444);">0</span>
<span class="t" style="left:715.6px;top:449px;font-size:13.5px;line-height:17px;color:#1f1f1f;transform:scaleX(0.8444);">0</span>
<span class="t" style="left:715.6px;top:469px;font-size:13.5px;line-height:17px;color:#1f1f1f;transform:scaleX(0.8444);">0</span>
<span class="t" style="left:715.6px;top:489px;font-size:13.5px;line-height:17px;color:#1f1f1f;transform:scaleX(0.8444);">0</span>
<span class="t" style="left:715.6px;top:509px;font-size:13.5px;line-height:17px;color:#1f1f1f;transform:scaleX(0.8444);">0</span>
<span class="t" style="left:715.6px;top:529px;font-size:13.5px;line-height:17px;color:#1f1f1f;transform:scaleX(0.8444);">0</span>
<span class="t" style="left:715.6px;top:549px;font-size:13.5px;line-height:17px;color:#1f1f1f;transform:scaleX(0.8444);">0</span>
<span class="t" style="left:800.8px;top:309px;font-size:13.5px;line-height:17px;color:#1f1f1f;transform:scaleX(0.8189);">4</span>
<span class="t" style="left:800.6px;top:329px;font-size:13.5px;line-height:17px;color:#1f1f1f;transform:scaleX(0.8444);">0</span>
<span class="t" style="left:800.6px;top:349px;font-size:13.5px;line-height:17px;color:#1f1f1f;transform:scaleX(0.8444);">0</span>
<span class="t" style="left:800.6px;top:369px;font-size:13.5px;line-height:17px;color:#1f1f1f;transform:scaleX(0.8444);">0</span>
<span class="t" style="left:800.6px;top:389px;font-size:13.5px;line-height:17px;color:#1f1f1f;transform:scaleX(0.8444);">0</span>
<span class="t" style="left:800.6px;top:409px;font-size:13.5px;line-height:17px;color:#1f1f1f;transform:scaleX(0.8444);">0</span>
<span class="t" style="left:800.6px;top:429px;font-size:13.5px;line-height:17px;color:#1f1f1f;transform:scaleX(0.8444);">0</span>
<span class="t" style="left:800.6px;top:449px;font-size:13.5px;line-height:17px;color:#1f1f1f;transform:scaleX(0.8444);">0</span>
<span class="t" style="left:800.6px;top:469px;font-size:13.5px;line-height:17px;color:#1f1f1f;transform:scaleX(0.8444);">0</span>
<span class="t" style="left:800.6px;top:489px;font-size:13.5px;line-height:17px;color:#1f1f1f;transform:scaleX(0.8444);">0</span>
<span class="t" style="left:800.6px;top:509px;font-size:13.5px;line-height:17px;color:#1f1f1f;transform:scaleX(0.8444);">0</span>
<span class="t" style="left:800.6px;top:529px;font-size:13.5px;line-height:17px;color:#1f1f1f;transform:scaleX(0.8444);">0</span>
<span class="t" style="left:800.6px;top:549px;font-size:13.5px;line-height:17px;color:#1f1f1f;transform:scaleX(0.8444);">0</span>
<span class="t" style="left:885.2px;top:309px;font-size:13.5px;line-height:17px;color:#1f1f1f;transform:scaleX(0.9318);">1</span>
<span class="t" style="left:885.2px;top:329px;font-size:13.5px;line-height:17px;color:#1f1f1f;transform:scaleX(0.9318);">1</span>
<span class="t" style="left:885.2px;top:349px;font-size:13.5px;line-height:17px;color:#1f1f1f;transform:scaleX(0.9318);">1</span>
<span class="t" style="left:885.2px;top:369px;font-size:13.5px;line-height:17px;color:#1f1f1f;transform:scaleX(0.9318);">1</span>
<span class="t" style="left:885.2px;top:389px;font-size:13.5px;line-height:17px;color:#1f1f1f;transform:scaleX(0.9318);">1</span>
<span class="t" style="left:885.2px;top:409px;font-size:13.5px;line-height:17px;color:#1f1f1f;transform:scaleX(0.9318);">1</span>
<span class="t" style="left:885.2px;top:429px;font-size:13.5px;line-height:17px;color:#1f1f1f;transform:scaleX(0.9318);">1</span>
<span class="t" style="left:885.2px;top:449px;font-size:13.5px;line-height:17px;color:#1f1f1f;transform:scaleX(0.9318);">1</span>
<span class="t" style="left:885.2px;top:469px;font-size:13.5px;line-height:17px;color:#1f1f1f;transform:scaleX(0.9318);">1</span>
<span class="t" style="left:885.2px;top:489px;font-size:13.5px;line-height:17px;color:#1f1f1f;transform:scaleX(0.9318);">1</span>
<span class="t" style="left:885.2px;top:509px;font-size:13.5px;line-height:17px;color:#1f1f1f;transform:scaleX(0.9318);">1</span>
<span class="t" style="left:885.2px;top:529px;font-size:13.5px;line-height:17px;color:#1f1f1f;transform:scaleX(0.9318);">1</span>
<span class="t" style="left:885.2px;top:549px;font-size:13.5px;line-height:17px;color:#1f1f1f;transform:scaleX(0.9318);">1</span>
<span class="t" style="left:949.5px;top:309px;font-size:13.5px;line-height:17px;color:#1f1f1f;transform:scaleX(0.9150);">1000</span>
<span class="t" style="left:949.5px;top:329px;font-size:13.5px;line-height:17px;color:#1f1f1f;transform:scaleX(0.9150);">1500</span>
<span class="t" style="left:970.6px;top:349px;font-size:13.5px;line-height:17px;color:#1f1f1f;transform:scaleX(0.8444);">0</span>
<span class="t" style="left:970.6px;top:369px;font-size:13.5px;line-height:17px;color:#1f1f1f;transform:scaleX(0.8444);">0</span>
<span class="t" style="left:970.6px;top:389px;font-size:13.5px;line-height:17px;color:#1f1f1f;transform:scaleX(0.8444);">0</span>
<span class="t" style="left:956.8px;top:409px;font-size:13.5px;line-height:17px;color:#1f1f1f;transform:scaleX(0.8959);">500</span>
<span class="t" style="left:956.8px;top:429px;font-size:13.5px;line-height:17px;color:#1f1f1f;transform:scaleX(0.8959);">500</span>
<span class="t" style="left:970.6px;top:449px;font-size:13.5px;line-height:17px;color:#1f1f1f;transform:scaleX(0.8444);">0</span>
<span class="t" style="left:970.6px;top:469px;font-size:13.5px;line-height:17px;color:#1f1f1f;transform:scaleX(0.8444);">0</span>
<span class="t" style="left:970.6px;top:489px;font-size:13.5px;line-height:17px;color:#1f1f1f;transform:scaleX(0.8444);">0</span>
<span class="t" style="left:970.6px;top:509px;font-size:13.5px;line-height:17px;color:#1f1f1f;transform:scaleX(0.8444);">0</span>
<span class="t" style="left:970.6px;top:529px;font-size:13.5px;line-height:17px;color:#1f1f1f;transform:scaleX(0.8444);">0</span>
<span class="t" style="left:970.6px;top:549px;font-size:13.5px;line-height:17px;color:#1f1f1f;transform:scaleX(0.8444);">0</span>
<span class="t" style="left:29.1px;top:290px;font-size:11px;line-height:14px;color:#333;">1</span>
<span class="t" style="left:29.2px;top:310px;font-size:11px;line-height:14px;color:#333;">2</span>
<span class="t" style="left:29.3px;top:330px;font-size:11px;line-height:14px;color:#333;">3</span>
<span class="t" style="left:29.3px;top:350px;font-size:11px;line-height:14px;color:#333;">4</span>
<span class="t" style="left:29.2px;top:370px;font-size:11px;line-height:14px;color:#333;">5</span>
<span class="t" style="left:29.2px;top:390px;font-size:11px;line-height:14px;color:#333;">6</span>
<span class="t" style="left:29.2px;top:410px;font-size:11px;line-height:14px;color:#333;">7</span>
<span class="t" style="left:29.2px;top:430px;font-size:11px;line-height:14px;color:#333;">8</span>
<span class="t" style="left:29.2px;top:450px;font-size:11px;line-height:14px;color:#333;">9</span>
<span class="t" style="left:26.0px;top:470px;font-size:11px;line-height:14px;color:#333;">10</span>
<span class="t" style="left:26.4px;top:490px;font-size:11px;line-height:14px;color:#333;">11</span>
<span class="t" style="left:26.0px;top:510px;font-size:11px;line-height:14px;color:#333;">12</span>
<span class="t" style="left:26.0px;top:530px;font-size:11px;line-height:14px;color:#333;">13</span>
<span class="t" style="left:25.9px;top:550px;font-size:11px;line-height:14px;color:#333;">14</span>
</body>
</html>
